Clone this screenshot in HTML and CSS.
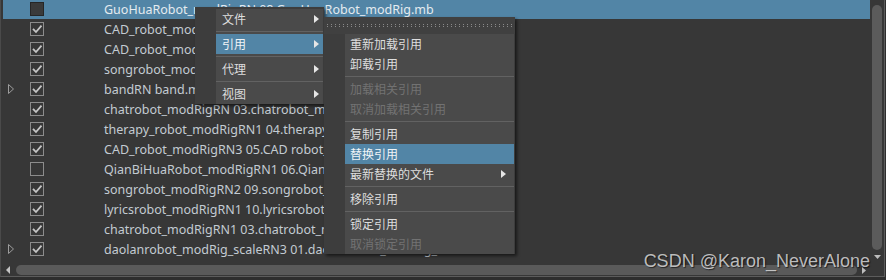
FILE: index.html
```html
<!DOCTYPE html>
<html>

<head>
    <title>Outliner</title>
    <meta charset="utf-8">

    <link rel="stylesheet" href="styles.css">
</head>

<body>
    <svg class="defs">
        <symbol id="box-on" viewBox="0 0 14 14">
            <rect x=".5" y=".5" width="13" height="13" fill="none" stroke="#8c8c8c" />
            <path d="M3 6.8l3 3.2 5.5-6.3" fill="none" stroke="#c6c6c6" stroke-width="1.8" />
        </symbol>
        <symbol id="box-off" viewBox="0 0 14 14">
            <rect x=".5" y=".5" width="13" height="13" fill="none" stroke="#8c8c8c" />
        </symbol>
        <symbol id="expand" viewBox="0 0 6 10">
            <path d="M.5 .5L5.5 5L.5 9.5Z" fill="none" stroke="#9c9c9c" />
        </symbol>
    </svg>

    <div class="outliner">
        <div class="rows">
            <div class="row selected">
                <span class="exp"></span>
                <svg class="cb cb-sel" viewBox="0 0 14 14"><rect x=".5" y=".5" width="13" height="13" fill="#3a3a3a" stroke="#262626" /></svg>
                <span class="name">GuoHuaRobot_modRigRN 08.GuoHuaRobot_modRig.mb</span>
            </div>
            <div class="row">
                <span class="exp"></span>
                <svg class="cb"><use href="#box-on" /></svg>
                <span class="name">CAD_robot_modRigRN1 05.CAD_robot_modRig.mb</span>
            </div>
            <div class="row">
                <span class="exp"></span>
                <svg class="cb"><use href="#box-on" /></svg>
                <span class="name">CAD_robot_modRigRN2 05.CAD_robot_modRig.mb</span>
            </div>
            <div class="row">
                <span class="exp"></span>
                <svg class="cb"><use href="#box-on" /></svg>
                <span class="name">songrobot_modRigRN 09.songrobot_modRig.mb</span>
            </div>
            <div class="row">
                <span class="exp"><svg class="tri"><use href="#expand" /></svg></span>
                <svg class="cb"><use href="#box-on" /></svg>
                <span class="name">bandRN band.mb</span>
            </div>
            <div class="row">
                <span class="exp"></span>
                <svg class="cb"><use href="#box-on" /></svg>
                <span class="name">chatrobot_modRigRN 03.chatrobot_modRig.mb</span>
            </div>
            <div class="row">
                <span class="exp"></span>
                <svg class="cb"><use href="#box-on" /></svg>
                <span class="name">therapy_robot_modRigRN1 04.therapy_robot_modRig.mb</span>
            </div>
            <div class="row">
                <span class="exp"></span>
                <svg class="cb"><use href="#box-on" /></svg>
                <span class="name">CAD_robot_modRigRN3 05.CAD robot_modRig.mb</span>
            </div>
            <div class="row">
                <span class="exp"></span>
                <svg class="cb"><use href="#box-off" /></svg>
                <span class="name">QianBiHuaRobot_modRigRN1 06.QianBiHuaRobot_modRig.mb</span>
            </div>
            <div class="row">
                <span class="exp"></span>
                <svg class="cb"><use href="#box-on" /></svg>
                <span class="name">songrobot_modRigRN2 09.songrobot_modRig.mb</span>
            </div>
            <div class="row">
                <span class="exp"></span>
                <svg class="cb"><use href="#box-on" /></svg>
                <span class="name">lyricsrobot_modRigRN1 10.lyricsrobot_modRig.mb</span>
            </div>
            <div class="row">
                <span class="exp"></span>
                <svg class="cb"><use href="#box-on" /></svg>
                <span class="name">chatrobot_modRigRN1 03.chatrobot_modRig.mb</span>
            </div>
            <div class="row">
                <span class="exp"><svg class="tri"><use href="#expand" /></svg></span>
                <svg class="cb"><use href="#box-on" /></svg>
                <span class="name">daolanrobot_modRig_scaleRN3 01.daolanrobot_modRig_scale.mb</span>
            </div>
        </div>

        <div class="vscroll">
            <div class="vthumb"></div>
            <svg class="arrow-down" viewBox="0 0 7 4"><path d="M0 0H7L3.5 4Z" fill="#bdbdbd" /></svg>
        </div>

        <div class="hscroll">
            <svg class="arrow-left" viewBox="0 0 4 8"><path d="M4 0V8L0 4Z" fill="#c4c4c4" /></svg>
            <div class="hthumb"></div>
            <svg class="arrow-right" viewBox="0 0 4 7"><path d="M0 0V7L4 3.5Z" fill="#bdbdbd" /></svg>
        </div>
        <div class="corner"></div>
    </div>

    <!-- context menu -->
    <div class="menu">
        <div class="menu-body">
            <div class="item">文件 <svg class="sub-arrow" viewBox="0 0 5 8"><path d="M0 0V8L5 4Z" /></svg></div>
            <div class="sep"></div>
            <div class="item active">引用 <svg class="sub-arrow" viewBox="0 0 5 8"><path d="M0 0V8L5 4Z" /></svg></div>
            <div class="sep"></div>
            <div class="item">代理 <svg class="sub-arrow" viewBox="0 0 5 8"><path d="M0 0V8L5 4Z" /></svg></div>
            <div class="sep"></div>
            <div class="item">视图 <svg class="sub-arrow" viewBox="0 0 5 8"><path d="M0 0V8L5 4Z" /></svg></div>
        </div>
    </div>

    <div class="submenu">
        <div class="tear"><span class="dots"></span></div>
        <div class="menu-body">
            <div class="item">重新加载引用</div>
            <div class="item">卸载引用</div>
            <div class="sep"></div>
            <div class="item disabled">加载相关引用</div>
            <div class="item disabled">取消加载相关引用</div>
            <div class="sep"></div>
            <div class="item">复制引用</div>
            <div class="item active">替换引用</div>
            <div class="item">最新替换的文件 <svg class="sub-arrow" viewBox="0 0 5 8"><path d="M0 0V8L5 4Z" /></svg></div>
            <div class="sep"></div>
            <div class="item">移除引用</div>
            <div class="sep"></div>
            <div class="item">锁定引用</div>
            <div class="item disabled">取消锁定引用</div>
        </div>
    </div>

    <div class="watermark">CSDN @Karon_NeverAlone</div>
</body>

</html>
```

FILE: styles.css
```css
body {
    margin: 0;
    width: 886px;
    height: 280px;
    overflow: hidden;
    position: relative;
    background: #2e2e2e;
    font-family: "Noto Sans", "Noto Sans CJK SC", sans-serif;
}

.defs {
    display: none;
}

/* outliner panel */
.outliner {
    display: grid;
    grid-template-columns: 1fr 14px;
    grid-template-rows: 263px 14px;
    width: 885px;
    height: 277px;
    box-sizing: border-box;
    border-left: 1px solid #4a4a4a;
    border-right: 1px solid #5c5c5c;
    border-bottom: 1px solid #5c5c5c;
    background: #373737;
}

.rows {
    padding-left: 2px;
    overflow: hidden;
}

.row {
    display: flex;
    align-items: center;
    height: 20px;
    white-space: nowrap;
    color: #c3cbd2;
    font-size: 12.5px;
}

.row:first-child {
    margin-top: -1px;
}

.row.selected {
    background: #5285a6;
    color: #e4ebf0;
}

.exp {
    display: flex;
    align-items: center;
    width: 22px;
    height: 20px;
    padding-left: 5px;
}

.tri {
    width: 6px;
    height: 10px;
}

.cb {
    width: 14px;
    height: 14px;
    flex: none;
}

.name {
    margin-left: 60px;
}

/* scrollbars */
.vscroll {
    display: flex;
    flex-direction: column;
    align-items: center;
    padding-top: 5px;
}

.vthumb {
    width: 10px;
    height: 245px;
    border-radius: 5px;
    background: #5b5b5b;
}

.arrow-down {
    width: 7px;
    height: 4px;
    margin-top: 5px;
}

.hscroll {
    display: flex;
    align-items: center;
}

.arrow-left {
    width: 4px;
    height: 8px;
    margin-left: 5px;
}

.hthumb {
    width: 841px;
    height: 10px;
    margin-left: 6px;
    border-radius: 5px;
    background: #5a5a5a;
}

.arrow-right {
    width: 4px;
    height: 7px;
    margin-left: 5px;
}

/* menus */
.menu,
.submenu {
    position: absolute;
    box-sizing: border-box;
    background: #3d3d3d;
    box-shadow: 2px 2px 3px rgba(0, 0, 0, 0.55);
    font-size: 12px;
}

.menu {
    left: 195px;
    top: 7px;
    width: 129px;
    height: 97px;
    padding-top: 2px;
}

.submenu {
    left: 324px;
    top: 17px;
    width: 191px;
    height: 237px;
}

.menu-body {
    margin-left: 21px;
    margin-right: 1px;
    background: #4a4a4a;
}

.item {
    display: flex;
    align-items: center;
    justify-content: space-between;
    height: 20px;
    padding: 0 4px 0 6px;
    color: #dedede;
}

.submenu .item {
    padding-left: 5px;
    padding-right: 8px;
}

.item.active {
    background: #5285a6;
    color: #f0f4f7;
}

.item.disabled {
    color: #727272;
}

.sub-arrow {
    width: 5px;
    height: 8px;
    fill: #e6e6e6;
}

.sep {
    height: 1px;
    margin: 2px 0;
    background: #626262;
}

.tear {
    display: flex;
    align-items: center;
    height: 17px;
    padding: 0 3px;
    background: #404040;
}

.dots {
    flex: 1;
    height: 3px;
    background:
        repeating-linear-gradient(90deg, #8a8a8a 0 1px, transparent 1px 4px) top / 100% 1px no-repeat,
        repeating-linear-gradient(90deg, #8a8a8a 0 1px, transparent 1px 4px) bottom / 100% 1px no-repeat;
}

.watermark {
    position: absolute;
    right: 16px;
    top: 251px;
    font: 18px "Liberation Sans", Arial, sans-serif;
    color: rgba(215, 215, 215, 0.85);
    text-shadow: 1px 1px 1px rgba(0, 0, 0, 0.6);
}
```
